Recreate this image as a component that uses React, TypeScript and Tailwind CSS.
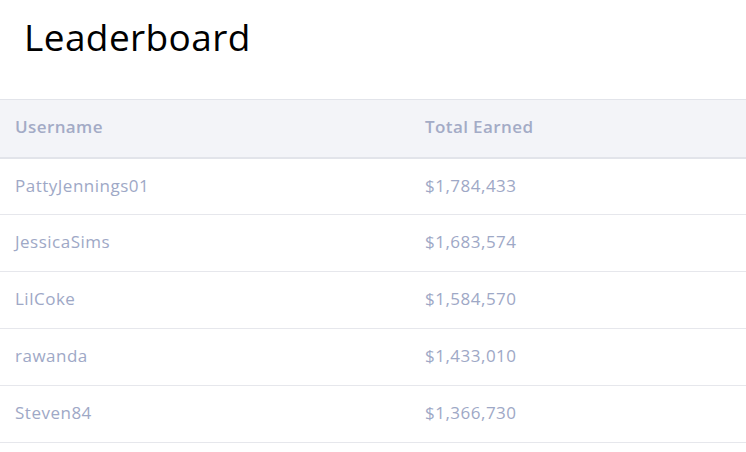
import React from 'react';

const leaders = [
  { username: 'PattyJennings01', total: '$1,784,433' },
  { username: 'JessicaSims', total: '$1,683,574' },
  { username: 'LilCoke', total: '$1,584,570' },
  { username: 'rawanda', total: '$1,433,010' },
  { username: 'Steven84', total: '$1,366,730' },
];

const App: React.FC = () => {
  return (
    <div className="min-h-screen bg-white font-['Open_Sans',sans-serif]">
      <h1 className="pl-6 pt-[13px] h-[99px] text-[37px] leading-[48px] tracking-[0.4px] text-black">Leaderboard</h1>
      <table className="w-full border-collapse text-left">
        <thead>
          <tr className="bg-[#f3f4f8] border-t border-[#e2e4ea] border-b-2">
            <th className="h-[58px] pl-[15px] pb-[3px] w-[425px] text-[17px] tracking-[0.4px] font-semibold text-[#a3abc6]">Username</th>
            <th className="h-[58px] pb-[3px] text-[17px] tracking-[0.4px] font-semibold text-[#a3abc6]">Total Earned</th>
          </tr>
        </thead>
        <tbody>
          {leaders.map((l) => (
            <tr key={l.username} className="border-b border-[#e6e7ec]">
              <td className="h-[57px] pl-[15px] pb-[2px] text-[17px] tracking-[0.5px] text-[#9ea8c6]">{l.username}</td>
              <td className="h-[57px] pb-[2px] text-[17px] tracking-[0.5px] text-[#9ea8c6]">{l.total}</td>
            </tr>
          ))}
        </tbody>
      </table>
    </div>
  );
};

export default App;
